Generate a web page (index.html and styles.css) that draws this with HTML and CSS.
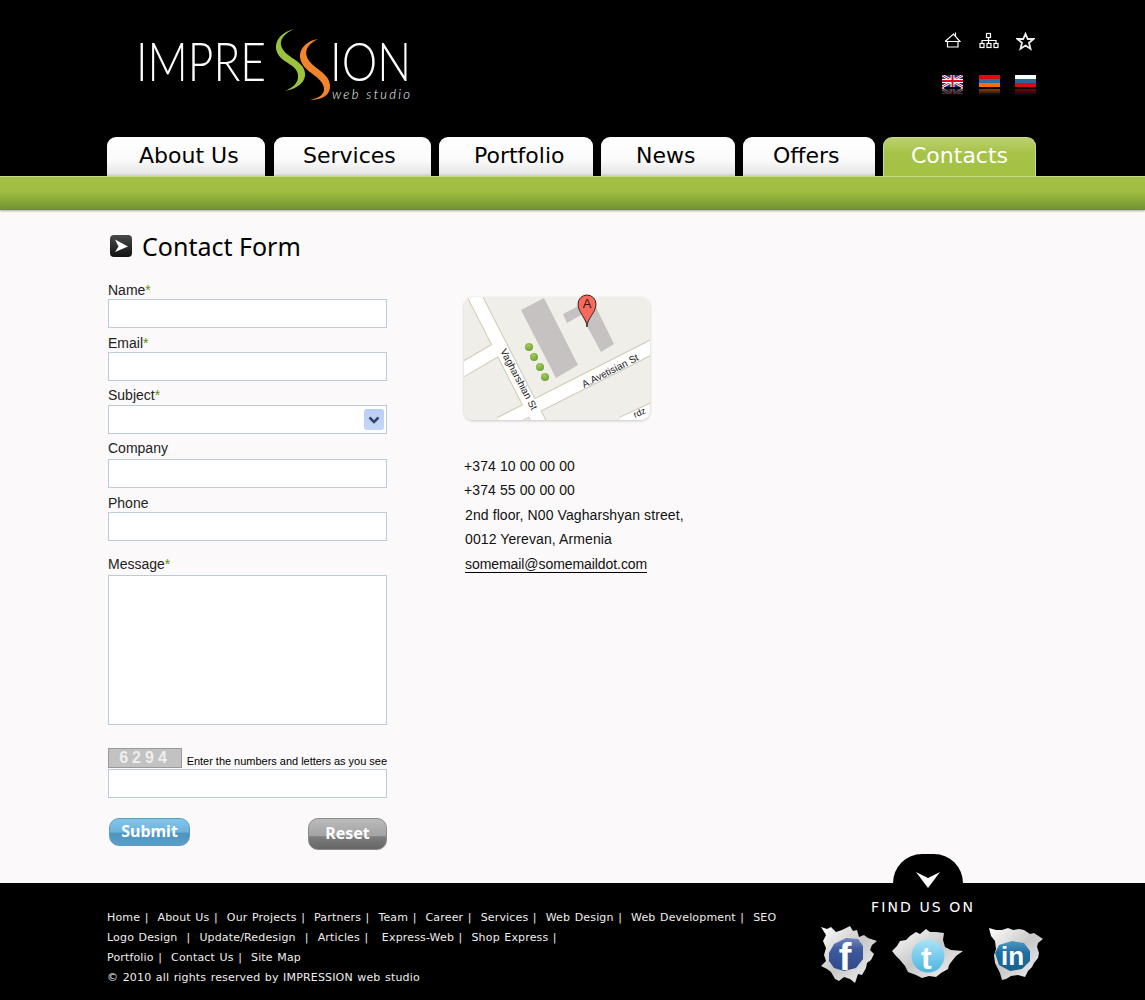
FILE: index.html
```html
<!DOCTYPE html>
<html lang="en">
<head>
    <meta charset="UTF-8">
    <meta name="viewport" content="width=device-width, initial-scale=1.0">
    <title>Contact Form</title>
    <link rel="stylesheet" href="styles.css">
</head>
<body>
<div class="header">
  <div class="header-top">
    <a class="logo" href="#">
      <svg width="300" height="76" viewBox="0 0 300 76">
        <text class="logo-word" x="0" y="53" textLength="130" lengthAdjust="spacingAndGlyphs">IMPRE</text>
        <text class="logo-word" x="194" y="53" textLength="81" lengthAdjust="spacingAndGlyphs">ION</text>
        <g transform="translate(3 0)">
          <path fill="#9bc43c" d="M155 1C143 4 134 13 138 24C142 35 158 36 159 47C160 55 153 60 146 63C157 61 167 55 166 45C165 33 148 30 143 20C139 12 146 5 155 1Z"/>
          <path fill="#f0852d" d="M179 11C167 13 158 22 162 33C166 45 183 48 185 60C186 67 179 70 171 72C183 72 192 67 191 57C190 44 172 40 168 29C165 21 171 15 179 11Z"/>
        </g>
        <text class="logo-sub" x="196" y="71" textLength="78" lengthAdjust="spacing">web studio</text>
      </svg>
    </a>
    <div class="tools">
      <div class="tool-icons">
        <svg width="17" height="16" viewBox="0 0 17 16" fill="none" stroke="#fff" stroke-width="1.200">
          <path d="M1 9.500L9.500 2L16 9.500H1M3.500 9.500V15H14V9.500M11.500 4V.5"/>
        </svg>
        <svg width="20" height="17" viewBox="0 0 20 17" fill="none" stroke="#fff" stroke-width="1.200">
          <rect x="7.500" y="1.500" width="4" height="4"/>
          <rect x="1" y="11.500" width="4" height="4"/>
          <rect x="8" y="11.500" width="4" height="4"/>
          <rect x="15" y="11.500" width="4" height="4"/>
          <path d="M9.500 5.500V11.500M3 11.500V8.500H17V11.500"/>
        </svg>
        <svg width="19" height="19" viewBox="0 0 19 19" fill="none" stroke="#eee" stroke-width="1.800">
          <path d="M9.500 1.800L11.800 7H17.500L13 10.800L14.500 16.800L9.500 13.600L4.500 16.800L6 10.800L1.500 7H7.200Z"/>
        </svg>
      </div>
      <div class="flags">
        <svg width="21" height="21" viewBox="0 0 21 21">
          <defs>
            <g id="flag-uk">
              <rect width="21" height="12" fill="#1f2f7c"/>
              <path d="M0 0L21 12M21 0L0 12" stroke="#fff" stroke-width="2.600"/>
              <path d="M0 0L21 12M21 0L0 12" stroke="#d0102a" stroke-width="1"/>
              <path d="M10.500 0V12M0 6H21" stroke="#fff" stroke-width="4"/>
              <path d="M10.500 0V12M0 6H21" stroke="#d0102a" stroke-width="2"/>
            </g>
            <linearGradient id="fade" x1="0" y1="0" x2="0" y2="1">
              <stop offset="0" stop-color="#000" stop-opacity=".45"/>
              <stop offset="1" stop-color="#000"/>
            </linearGradient>
          </defs>
          <use href="#flag-uk"/>
          <use href="#flag-uk" transform="translate(0 26) scale(1 -1)"/>
          <rect y="14" width="21" height="7" fill="url(#fade)"/>
        </svg>
        <svg width="21" height="21" viewBox="0 0 21 21">
          <rect width="21" height="4" fill="#d90c0c"/>
          <rect y="4" width="21" height="4" fill="#2f6da5"/>
          <rect y="8" width="21" height="4" fill="#ff6c0a"/>
          <rect y="14" width="21" height="4" fill="#ff6c0a"/>
          <rect y="18" width="21" height="3" fill="#2f6da5"/>
          <rect y="14" width="21" height="7" fill="url(#fade)"/>
        </svg>
        <svg width="21" height="21" viewBox="0 0 21 21">
          <rect width="21" height="4" fill="#fff"/>
          <rect y="4" width="21" height="4" fill="#2f639c"/>
          <rect y="8" width="21" height="4" fill="#d80a14"/>
          <rect y="14" width="21" height="4" fill="#d80a14"/>
          <rect y="18" width="21" height="3" fill="#2f639c"/>
          <rect y="14" width="21" height="7" fill="url(#fade)"/>
        </svg>
      </div>
    </div>
  </div>
  <div class="tabs">
    <a class="tab tab-about" href="#">About Us</a>
    <a class="tab tab-services" href="#">Services</a>
    <a class="tab tab-portfolio" href="#">Portfolio</a>
    <a class="tab tab-news" href="#">News</a>
    <a class="tab tab-offers" href="#">Offers</a>
    <a class="tab tab-contacts active" href="#">Contacts</a>
  </div>
</div>
<div class="greenbar"></div>

<div class="main">
  <h1 class="title">
    <svg width="22" height="22" viewBox="0 0 22 22">
      <defs>
        <linearGradient id="tile" x1="0" y1="0" x2="0" y2="1">
          <stop offset="0" stop-color="#4a4a4a"/>
          <stop offset="1" stop-color="#111"/>
        </linearGradient>
      </defs>
      <rect width="22" height="22" rx="4" fill="url(#tile)"/>
      <path d="M5 4.500L18 11.500L5 17L8.500 11.500Z" fill="#fff"/>
    </svg>
    Contact Form
  </h1>

  <div class="columns">
    <form class="form">
      <div class="field first">
        <label>Name<span class="req">*</span></label>
        <input type="text">
      </div>
      <div class="field">
        <label>Email<span class="req">*</span></label>
        <input type="text">
      </div>
      <div class="field subject">
        <label>Subject<span class="req">*</span></label>
        <div class="select-wrap">
          <select></select>
          <span class="select-arrow">
            <svg width="12" height="8" viewBox="0 0 12 8" fill="none" stroke="#33456b" stroke-width="2.500"><path d="M1.500 1.500L6 6L10.500 1.500"/></svg>
          </span>
        </div>
      </div>
      <div class="field company">
        <label>Company</label>
        <input type="text">
      </div>
      <div class="field">
        <label>Phone</label>
        <input type="text">
      </div>
      <div class="field message">
        <label>Message<span class="req">*</span></label>
        <textarea></textarea>
      </div>
      <div class="captcha-row">
        <span class="captcha">6294</span>
        <span class="captcha-text">Enter the numbers and letters as you see</span>
      </div>
      <input class="captcha-input" type="text">
      <div class="buttons">
        <button class="btn submit" type="button">Submit</button>
        <button class="btn reset" type="button">Reset</button>
      </div>
    </form>

    <div class="contact">
      <div class="map">
        <svg width="186" height="123" viewBox="0 0 186 123">
          <defs>
            <radialGradient id="bush" cx=".4" cy=".3" r=".8">
              <stop offset="0" stop-color="#a3cc5c"/>
              <stop offset="1" stop-color="#6b9a2e"/>
            </radialGradient>
          </defs>
          <rect width="186" height="123" fill="#f0eee9"/>
          <g fill="none" stroke="#d3c9b5" stroke-width="15">
            <path d="M9 -4L76 127M-4 74L32 53M36 127L190 49M158 127L190 112"/>
          </g>
          <g fill="none" stroke="#fff" stroke-width="13">
            <path d="M9 -4L76 127M-4 74L32 53M36 127L190 49M158 127L190 112"/>
          </g>
          <path fill="#c6c2c2" d="M57 13L80 1L114 68L92 81Z"/>
          <path fill="#c6c2c2" d="M99 17L128 2L150 47L137 55L117 18L103 26Z"/>
          <g fill="url(#bush)">
            <circle cx="65" cy="50" r="4"/>
            <circle cx="70" cy="60" r="4"/>
            <circle cx="76" cy="70" r="4"/>
            <circle cx="81" cy="80" r="4"/>
          </g>
          <text class="map-label" transform="translate(36 54) rotate(62)">Vagharshian St</text>
          <text class="map-label" transform="translate(120 91) rotate(-27)">A.Avetisian St</text>
          <text class="map-label small" transform="translate(171 121) rotate(-24)">rdz</text>
        </svg>
        <svg class="map-pin" width="20" height="34" viewBox="0 0 20 34">
          <path d="M10 33C10 24 19 19 19 10A9 9 0 0 0 1 10C1 19 10 24 10 33Z" fill="#f76b5e" stroke="#3a2320" stroke-width="1"/>
          <text x="10" y="14" text-anchor="middle" class="pin-letter">A</text>
        </svg>
      </div>
      <div class="address">
        <div>+374 10 00 00 00</div>
        <div>+374 55 00 00 00</div>
        <div class="indent">2nd floor, N00 Vagharshyan street,</div>
        <div class="indent">0012 Yerevan, Armenia</div>
        <div class="indent"><a href="#">somemail@somemaildot.com</a></div>
      </div>
    </div>
  </div>
</div>

<div class="footer">
  <div class="bulge">
    <svg width="24" height="16" viewBox="0 0 24 16"><path d="M0 0L12 6L24 0L12 16Z" fill="#fff"/></svg>
  </div>
  <div class="footer-links">
    <a href="#">Home</a> |&nbsp; <a href="#">About Us</a> |&nbsp; <a href="#">Our Projects</a> |&nbsp; <a href="#">Partners</a> |&nbsp; <a href="#">Team</a> |&nbsp; <a href="#">Career</a> |&nbsp; <a href="#">Services</a> |&nbsp; <a href="#">Web Design</a> |&nbsp; <a href="#">Web Development</a> |&nbsp; <a href="#">SEO</a><br>
    <a href="#">Logo Design</a> &nbsp;|&nbsp; <a href="#">Update/Redesign</a> &nbsp;|&nbsp; <a href="#">Articles</a> |&nbsp;&nbsp; <a href="#">Express-Web</a> |&nbsp; <a href="#">Shop Express</a> |<br>
    <a href="#">Portfolio</a> |&nbsp; <a href="#">Contact Us</a> |&nbsp; <a href="#">Site Map</a><br>
    &copy; 2010 all rights reserved by IMPRESSION web studio
  </div>
  <div class="social">
    <div class="find">FIND US ON</div>
    <div class="social-icons">
      <svg width="58" height="58" viewBox="0 0 58 58">
        <defs>
          <linearGradient id="paper" x1="0" y1="0" x2="1" y2="1">
            <stop offset="0" stop-color="#fff"/>
            <stop offset=".5" stop-color="#c8c8c8"/>
            <stop offset="1" stop-color="#f6f6f6"/>
          </linearGradient>
          <linearGradient id="fb" x1="0" y1="0" x2="0" y2="1">
            <stop offset="0" stop-color="#6f86bd"/>
            <stop offset=".35" stop-color="#3f5a9c"/>
            <stop offset="1" stop-color="#2f4a8c"/>
          </linearGradient>
          <linearGradient id="tw" x1="0" y1="0" x2="0" y2="1">
            <stop offset="0" stop-color="#a9e3f7"/>
            <stop offset="1" stop-color="#4cb4e2"/>
          </linearGradient>
          <linearGradient id="li" x1="0" y1="0" x2="0" y2="1">
            <stop offset="0" stop-color="#4d97c4"/>
            <stop offset=".4" stop-color="#1f6fa3"/>
            <stop offset="1" stop-color="#17608f"/>
          </linearGradient>
        </defs>
        <path fill="url(#paper)" d="M1 2L7 4L11 2L16 7L22 5L30 1L33 6L37 5L39 12L44 10L48 13L57 16L52 20L50 25L54 29L51 35L47 38L46 43L42 50L38 49L35 58L30 54L24 52L19 56L15 54L11 47L7 44L1 41L6 36L4 30L6 23L3 16L6 10Z"/>
        <path fill="url(#fb)" d="M9 28L14 19L26 13L38 14L43 21L43 34L36 43L24 46L14 43L9 36Z"/>
        <text class="social-f" x="25" y="45">f</text>
      </svg>
      <svg class="twitter" width="72" height="50" viewBox="0 0 72 50">
        <path fill="url(#paper)" d="M0 22L5 17L8 12L14 11L18 7L24 3L28 5L34 0L38 3L44 3L52 4L51 11L53 18L59 21L71 22L64 27L60 32L57 36L56 40L49 44L44 48L37 47L30 49L24 46L16 43L13 37L8 31L4 27Z"/>
        <circle cx="36" cy="27" r="16.500" fill="url(#tw)"/>
        <text class="social-t" x="29" y="40">t</text>
      </svg>
      <svg class="linkedin" width="56" height="53" viewBox="0 0 56 53">
        <path fill="url(#paper)" d="M1 1L8 3L14 3L20 1L25 3L31 2L36 3L42 7L46 6L55 12L50 16L49 20L51 26L50 31L46 36L44 40L40 44L37 50L30 48L23 49L18 52L14 53L12 46L10 42L7 36L6 28L8 22L7 14L3 9Z"/>
        <path fill="url(#li)" d="M7 26L11 18L24 14L36 16L42 24L42 34L34 42L22 44L11 38Z"/>
        <text class="social-in" x="24.500" y="38" text-anchor="middle">in</text>
      </svg>
    </div>
  </div>
</div>
</body>
</html>
```

FILE: styles.css
```css
body { margin: 0; background-color: #fbf9fa; font-family: "Liberation Sans", Arial, sans-serif; color: #000; }
a { color: inherit; text-decoration: none; }

/* header */
.header { background-color: #000; height: 176px; }
.header-top { display: flex; justify-content: space-between; height: 137px; padding: 28px 109px 0 136px; box-sizing: border-box; }
.logo { display: block; height: 76px; }
.logo-word { font-family: Lato, "Open Sans", sans-serif; font-weight: 300; font-size: 54px; fill: #fff; }
.logo-sub { font-family: Lato, "Open Sans", sans-serif; font-weight: 300; font-style: italic; font-size: 13px; fill: #fff; }
.tools { width: 94px; }
.tool-icons { display: flex; justify-content: space-between; align-items: flex-start; padding: 4px 1px 0 2px; height: 43px; }
.flags { display: flex; justify-content: space-between; }

.tabs { display: flex; gap: 8px; padding-left: 107px; height: 39px; }
.tab { display: block; box-sizing: border-box; height: 39px; line-height: 38px; font-family: "DejaVu Sans", Verdana, sans-serif; font-size: 22px; color: #000; background: linear-gradient(#fff 0%, #fafafa 60%, #e6e6e6 94%, #c9c9c9 100%); border-radius: 9px 9px 0 0; }
.tab-about { width: 158px; padding-left: 32px; margin-right: 1px; }
.tab-services { width: 157px; padding-left: 29px; }
.tab-portfolio { width: 154px; padding-left: 35px; }
.tab-news { width: 134px; padding-left: 35px; }
.tab-offers { width: 132px; padding-left: 30px; }
.tab-contacts { width: 153px; padding-left: 27px; }
.tab.active { color: #fff; background: linear-gradient(#bcd070 0%, #a6c348 40%, #a3c243 100%); border: 1px solid #c9dc8f; border-bottom: 0; line-height: 36px; }

.greenbar { height: 34px; box-sizing: border-box; border-top: 1px solid #c5d98a; background: linear-gradient(#a2c043 0%, #9fbd41 45%, #6f9130 100%); box-shadow: 0 1px 2px rgba(0,0,0,.35); }

/* main */
.main { padding: 23px 0 33px 108px; }
.title { display: flex; align-items: center; gap: 10px; margin: 0 0 0 2px; height: 26px; font-family: "Noto Sans", Verdana, sans-serif; font-size: 25px; font-weight: 400; }
.columns { display: flex; gap: 77px; }

.form { width: 279px; }
.field { margin-top: 7px; }
.field.first { margin-top: 23px; }
.field.subject { margin-top: 6px; }
.field.subject label { margin-bottom: 2px; }
.field.company { margin-top: 6px; }
.field.company label { margin-bottom: 3px; }
.field.message { margin-top: 15px; }
.field label { display: block; height: 16px; margin-bottom: 1px; line-height: 16px; font-size: 14px; color: #222; }
.field.message label { margin-bottom: 3px; }
.req { color: #5c9300; }
input, select, textarea { display: block; box-sizing: border-box; width: 279px; height: 29px; margin: 0; padding: 2px 4px; background-color: #fff; border: 1px solid #bccbd8; border-radius: 0; }
select { appearance: none; }
textarea { height: 150px; resize: none; }
.select-wrap { position: relative; }
.select-arrow { position: absolute; top: 4px; right: 3px; display: flex; align-items: center; justify-content: center; width: 20px; height: 21px; background: linear-gradient(#b9cdf5, #c6d8f8); border-radius: 3px; }

.captcha-row { display: flex; align-items: flex-end; justify-content: space-between; height: 20px; margin-top: 23px; margin-bottom: 1px; }
.captcha { box-sizing: border-box; width: 74px; height: 20px; line-height: 18px; text-align: center; font-weight: bold; font-size: 16px; letter-spacing: 4px; color: #eee; background-color: #c2c2c2; border: 1px solid #999; }
.captcha-text { font-size: 11px; line-height: 14px; letter-spacing: -.02px; }

.buttons { display: flex; justify-content: space-between; align-items: flex-start; margin-top: 20px; }
.btn { display: block; font-family: "Noto Sans", Verdana, sans-serif; font-size: 16px; font-weight: bold; color: #fff; padding: 0 0 2px; border: 1px solid transparent; }
.submit { width: 81px; height: 28px; margin-left: 1px; border-radius: 10px; border-color: #5a9dc4; background: linear-gradient(#82c6ea 0%, #6bb2dc 50%, #4d94bf 55%, #5b9fca 100%); }
.reset { width: 79px; height: 32px; border-radius: 10px; border-color: #8a8a8a; background: linear-gradient(#bcbcbc 0%, #a3a3a3 55%, #7c7c7c 60%, #666 100%); }

/* map and address */
.contact { padding-top: 38px; width: 240px; }
.map { position: relative; width: 186px; height: 123px; border-radius: 9px; box-shadow: 0 1px 3px rgba(0,0,0,.2); }
.map > svg:first-child { display: block; border-radius: 9px; }
.map-label { font-size: 10px; fill: #222; }
.map-label.small { font-size: 9px; }
.map-pin { position: absolute; top: -3px; left: 113px; }
.pin-letter { font-size: 13px; fill: #3a1510; }
.address { margin-top: 34px; font-size: 14px; line-height: 24.4px; color: #111; letter-spacing: .1px; white-space: nowrap; }
.indent { padding-left: 1px; }
.address a { border-bottom: 1px solid #000; letter-spacing: -.07px; }

/* footer */
.footer { position: relative; display: flex; height: 117px; box-sizing: border-box; background-color: #000; color: #fff; padding: 25px 0 0 107px; }
.bulge { position: absolute; top: -29px; left: 893px; width: 70px; height: 29px; display: flex; justify-content: center; padding-top: 18px; box-sizing: border-box; background-color: #000; border-radius: 35px 35px 0 0; }
.footer-links { width: 713px; font-family: "DejaVu Sans", Verdana, sans-serif; font-size: 11px; line-height: 20px; letter-spacing: .16px; word-spacing: .85px; white-space: nowrap; color: #eee; }
.social { margin-top: -9px; }
.find { margin-left: 51px; font-family: "DejaVu Sans", Verdana, sans-serif; font-size: 14px; line-height: 16px; letter-spacing: 2.1px; color: #fff; white-space: nowrap; }
.social-icons { display: flex; align-items: flex-start; gap: 14px; margin-top: 10px; }
.twitter { margin-top: 4px; }
.linkedin { margin-top: 2px; margin-left: 10px; }
.social-f { font-family: "Liberation Sans", sans-serif; font-weight: bold; font-size: 38px; fill: #fff; text-anchor: middle; }
.social-t { font-family: "Liberation Sans", sans-serif; font-weight: bold; font-size: 32px; fill: #fff; }
.social-in { font-family: "Liberation Sans", sans-serif; font-weight: bold; font-size: 26px; fill: #fff; }
```
